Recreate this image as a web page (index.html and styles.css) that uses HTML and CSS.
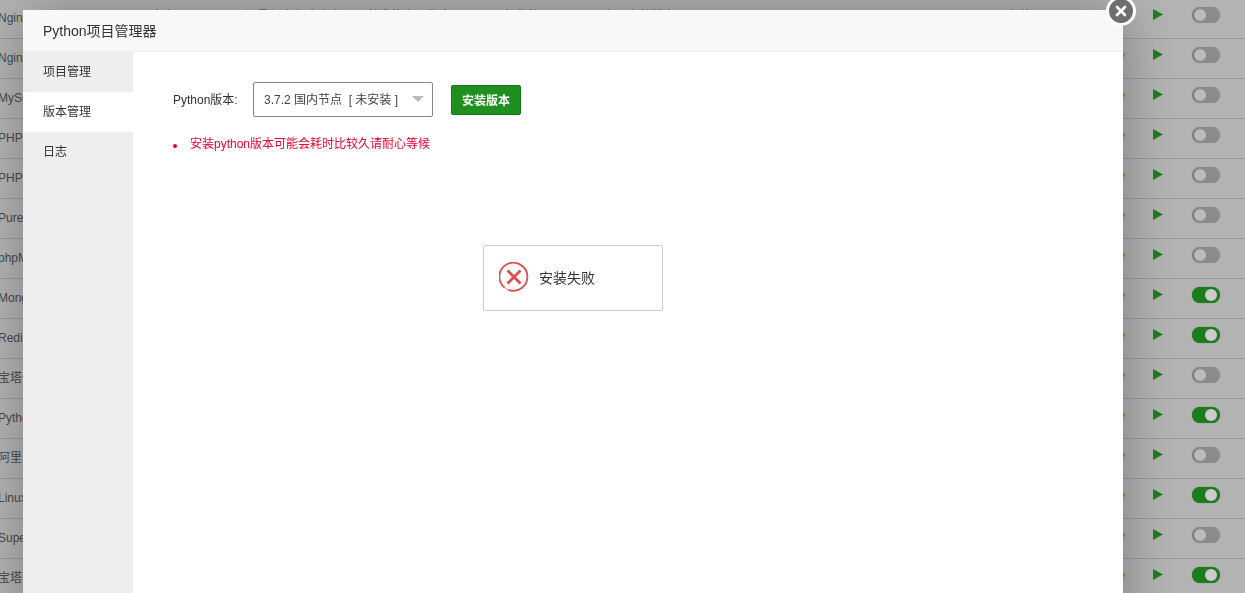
FILE: index.html
```html
<!DOCTYPE html>
<html lang="zh-CN">
<head>
<meta charset="utf-8">
<title>Python项目管理器</title>
<link rel="stylesheet" href="styles.css">
</head>
<body>
<svg class="defs" width="0" height="0" aria-hidden="true"><defs>
<symbol id="play" viewBox="0 0 10 11"><path d="M0 0L10 5.5L0 11Z"/></symbol>
</defs></svg>
<main class="table">
  <div class="row"><span class="name">Nginx 1.14</span><div class="notes"><span>官方</span><span>轻量级占有</span><span>内存少</span><span>并发能力强稳定</span><span>免费使用</span><span class="note-green">立即安装版本</span><span>已安装</span></div><i class="mark"></i><svg class="play"><use href="#play"/></svg><span class="toggle"></span></div>
  <div class="row"><span class="name">Nginx防火墙</span><span class="fill"></span><i class="mark"></i><svg class="play"><use href="#play"/></svg><span class="toggle"></span></div>
  <div class="row"><span class="name">MySQL 5.6</span><span class="fill"></span><i class="mark"></i><svg class="play"><use href="#play"/></svg><span class="toggle"></span></div>
  <div class="row"><span class="name">PHP-5.6</span><span class="fill"></span><i class="mark"></i><svg class="play"><use href="#play"/></svg><span class="toggle"></span></div>
  <div class="row"><span class="name">PHP-7.2</span><span class="fill"></span><i class="mark"></i><svg class="play"><use href="#play"/></svg><span class="toggle"></span></div>
  <div class="row"><span class="name">Pure-Ftpd</span><span class="fill"></span><i class="mark"></i><svg class="play"><use href="#play"/></svg><span class="toggle"></span></div>
  <div class="row"><span class="name">phpMyAdmin</span><span class="fill"></span><i class="mark"></i><svg class="play"><use href="#play"/></svg><span class="toggle"></span></div>
  <div class="row"><span class="name">MongoDB</span><span class="fill"></span><i class="mark"></i><svg class="play"><use href="#play"/></svg><span class="toggle on"></span></div>
  <div class="row"><span class="name">Redis</span><span class="fill"></span><i class="mark"></i><svg class="play"><use href="#play"/></svg><span class="toggle on"></span></div>
  <div class="row"><span class="name">宝塔一键迁移</span><span class="fill"></span><i class="mark"></i><svg class="play"><use href="#play"/></svg><span class="toggle"></span></div>
  <div class="row"><span class="name">Python项目管理器</span><span class="fill"></span><i class="mark"></i><svg class="play"><use href="#play"/></svg><span class="toggle on"></span></div>
  <div class="row"><span class="name">阿里云OSS</span><span class="fill"></span><i class="mark"></i><svg class="play"><use href="#play"/></svg><span class="toggle"></span></div>
  <div class="row"><span class="name">Linux工具箱</span><span class="fill"></span><i class="mark"></i><svg class="play"><use href="#play"/></svg><span class="toggle on"></span></div>
  <div class="row"><span class="name">Supervisor</span><span class="fill"></span><i class="mark"></i><svg class="play"><use href="#play"/></svg><span class="toggle"></span></div>
  <div class="row"><span class="name">宝塔SSH终端</span><span class="fill"></span><i class="mark"></i><svg class="play"><use href="#play"/></svg><span class="toggle on"></span></div>
</main>
<div class="overlay"></div>
<section class="modal">
  <header class="modal-title">Python项目管理器</header>
  <button class="close" type="button" aria-label="关闭"><svg viewBox="0 0 24 24" width="24" height="24"><path d="M8 8L16 16M16 8L8 16"/></svg></button>
  <div class="modal-body">
    <nav class="side">
      <a class="side-item">项目管理</a>
      <a class="side-item active">版本管理</a>
      <a class="side-item">日志</a>
    </nav>
    <div class="content">
      <div class="form-line">
        <span class="form-label">Python版本:</span>
        <div class="select"><span>3.7.2 国内节点 &nbsp;[ 未安装 ]</span><i class="caret"></i></div>
        <button class="btn" type="button">安装版本</button>
      </div>
      <ul class="tips"><li>安装python版本可能会耗时比较久请耐心等候</li></ul>
    </div>
  </div>
  <div class="toast">
    <svg class="toast-icon" viewBox="0 0 30 30" width="30" height="30"><path class="ring" d="M5.5 25.6A14 14 0 1 1 9.5 27.9"/><path class="ring-thin" d="M5.5 25.6A14 14 0 0 0 9.5 27.9"/><path class="cross" d="M8.5 8.5L21.5 21.5M21.5 8.5L8.5 21.5"/></svg>
    <span class="toast-text">安装失败</span>
  </div>
</section>
</body>
</html>
```
FILE: styles.css
```css
* { box-sizing: border-box; }
html, body { margin: 0; height: 100%; overflow: hidden; }
body {
  background: #e0e0e0;
  color: #5c5c5c;
  font: 12px/1.4 "Liberation Sans", "Noto Sans CJK SC", sans-serif;
}
.defs { position: absolute; }

.table { margin: -1px 0 0 -2px; }
.row {
  display: flex;
  align-items: flex-start;
  height: 40px;
  padding-right: 25px;
  border-bottom: 1px solid #bfbfbf;
}
.name { width: 153px; line-height: 39px; white-space: nowrap; overflow: hidden; }
.fill { flex: 1; }
.notes {
  flex: 1;
  display: grid;
  grid-template-columns: 94px 61px 61px 136px 100px 392px 1fr;
  margin-top: 10px;
  line-height: 14px;
  white-space: nowrap;
  overflow: hidden;
}
.note-green { color: #3f8f4f; }
.mark {
  width: 0;
  height: 0;
  margin-top: 14px;
  border-left: 3px solid transparent;
  border-right: 3px solid transparent;
  border-top: 7px solid #cebe48;
}
.play { width: 10px; height: 11px; margin: 10px 0 0 27px; fill: #279c27; }
.toggle {
  position: relative;
  width: 28px;
  height: 16px;
  margin: 8px 0 0 29px;
  border-radius: 8px;
  background: #aeaeae;
  box-shadow: 0 0 1px #aeaeae;
}
.toggle::after {
  content: "";
  position: absolute;
  top: 2px;
  left: 2px;
  width: 12px;
  height: 12px;
  border-radius: 50%;
  background: #eaeaea;
  box-shadow: -1px 0 1px #8c8c8c;
}
.toggle.on { background: #239c23; box-shadow: 0 0 1px #239c23; }
.toggle.on::after { left: auto; right: 3px; background: #fff; box-shadow: none; }

.overlay { position: fixed; inset: 0; background: rgba(0, 0, 0, .2); }

.modal {
  position: fixed;
  top: 10px;
  left: 23px;
  bottom: -60px;
  width: 1100px;
  display: flex;
  flex-direction: column;
  background: #fff;
  color: #333;
  box-shadow: 1px 1px 50px rgba(0, 0, 0, .3);
}
.modal-title {
  height: 42px;
  padding-left: 20px;
  background: #f8f8f8;
  border-bottom: 1px solid #eee;
  font-size: 14px;
  line-height: 43px;
}
.close {
  position: absolute;
  top: -14px;
  right: -13px;
  width: 30px;
  height: 30px;
  display: flex;
  align-items: center;
  justify-content: center;
  padding: 0;
  border: 3px solid #fff;
  border-radius: 50%;
  background: #6e6e6e;
}
.close svg { flex: none; fill: none; stroke: #fff; stroke-width: 2.6; stroke-linecap: round; }

.modal-body { flex: 1; display: flex; min-height: 0; }
.side { width: 110px; background: #eee; }
.side-item { display: block; height: 40px; padding-left: 20px; line-height: 40px; color: #333; }
.side-item.active { background: #fff; }

.content { flex: 1; padding: 30px 40px; }
.form-line { display: flex; align-items: center; }
.form-label { width: 80px; padding-top: 1px; }
.select {
  display: flex;
  align-items: center;
  justify-content: space-between;
  width: 180px;
  height: 35px;
  padding: 1px 8px 0 10px;
  border: 1px solid #888;
  border-radius: 2px;
  color: #444;
}
.caret {
  width: 0;
  height: 0;
  margin-bottom: 3px;
  border-left: 6px solid transparent;
  border-right: 6px solid transparent;
  border-top: 6px solid #bbb;
}
.btn {
  width: 70px;
  height: 30px;
  margin-left: 18px;
  padding: 0 0 1px;
  border: 1px solid #16781a;
  border-radius: 2px;
  background: #1f901f;
  color: #fff;
  font: bold 12px "Liberation Sans", "Noto Sans CJK SC", sans-serif;
}
.tips { margin: 19px 0 0; padding: 0; list-style: none; color: #f0002d; }
.tips li { position: relative; padding-left: 17px; line-height: 17px; }
.tips li::before {
  content: "";
  position: absolute;
  left: 0;
  top: 8px;
  width: 4px;
  height: 4px;
  border-radius: 50%;
  background: #e8001c;
}

.toast {
  position: absolute;
  top: 235px;
  left: 460px;
  width: 180px;
  height: 66px;
  display: flex;
  align-items: center;
  gap: 10px;
  padding-left: 15px;
  background: #fff;
  border: 1px solid #ccc;
  border-radius: 2px;
  font-size: 14px;
}
.toast-text { padding-top: 1px; }
.toast-icon { flex: none; margin-bottom: 2px; fill: none; stroke: #e04b4b; }
.ring { stroke-width: 1.8; }
.ring-thin { stroke-width: .7; }
.cross { stroke-width: 2.8; }
```
